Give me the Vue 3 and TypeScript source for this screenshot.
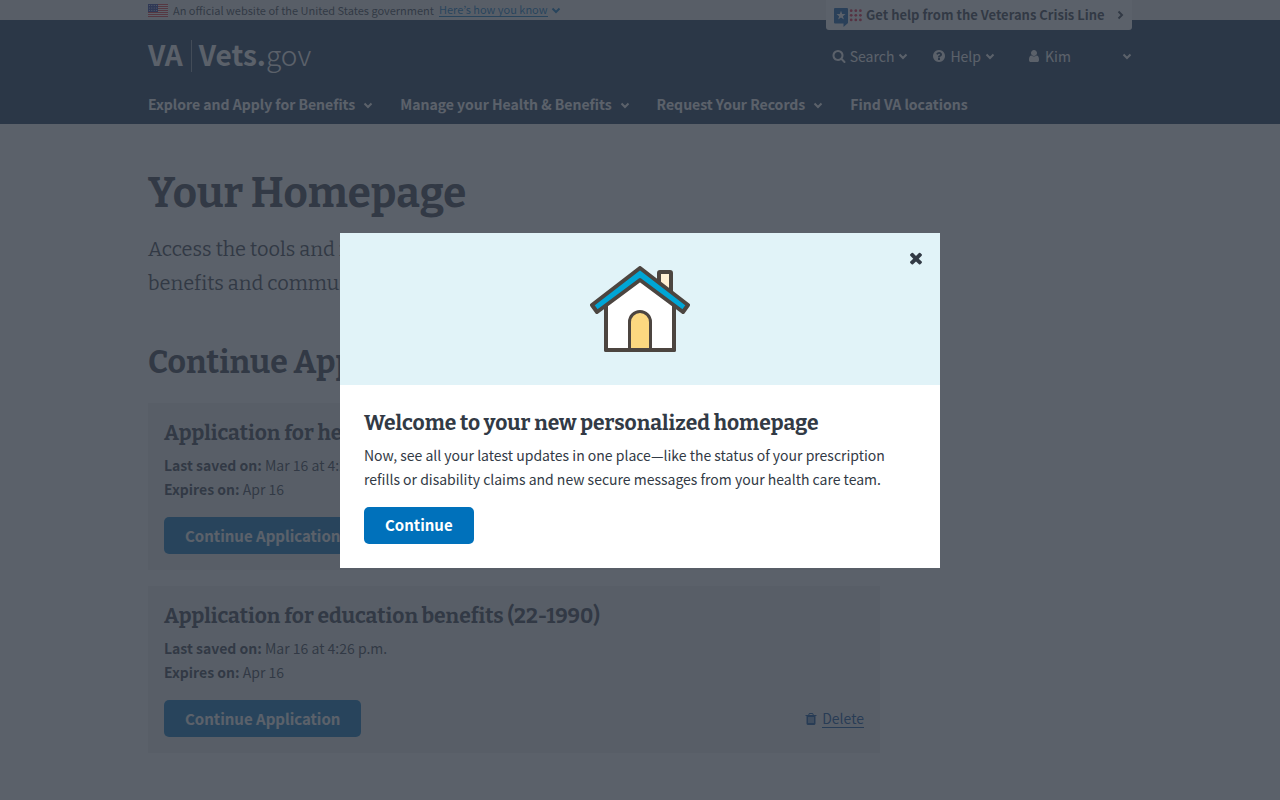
<script setup lang="ts">
import { ref } from 'vue'

interface NavItem {
  label: string
  menu: boolean
}

interface SavedForm {
  title: string
  saved: string
  expires: string
}

const navItems: NavItem[] = [
  { label: 'Explore and Apply for Benefits', menu: true },
  { label: 'Manage your Health & Benefits', menu: true },
  { label: 'Request Your Records', menu: true },
  { label: 'Find VA locations', menu: false },
]

const forms: SavedForm[] = [
  { title: 'Application for health care (10-10EZ)', saved: 'Mar 16 at 4:26 p.m.', expires: 'Apr 16' },
  { title: 'Application for education benefits (22-1990)', saved: 'Mar 16 at 4:26 p.m.', expires: 'Apr 16' },
]

const modalOpen = ref(true)
const stripes = [0, 2, 4, 6, 8, 10, 12]
const dots = [0, 1, 2, 3, 4, 5, 6, 7, 8]
const stars = [0, 1, 2, 3, 4, 5, 6, 7, 8, 9, 10, 11]
</script>

<template>
  <div class="page">
    <div class="banner">
      <div class="wrap banner-row">
        <svg class="flag" viewBox="0 0 20 13" aria-hidden="true">
          <rect width="20" height="13" fill="#fff" />
          <rect v-for="y in stripes" :key="y" :y="y" width="20" height="1" fill="#e0343a" />
          <rect width="10" height="8" fill="#2a3a9c" />
          <circle v-for="s in stars" :key="s" :cx="1.4 + (s % 4) * 2.4" :cy="1.4 + Math.floor(s / 4) * 2.5" r="0.5" fill="#fff" />
        </svg>
        <span>An official website of the United States government</span>
        <button type="button" class="know">
          <span class="know-text">Here’s how you know</span>
          <svg class="chev" viewBox="0 0 10 7" aria-hidden="true"><path d="M1.5 1.5 5 5l3.500-3.500" /></svg>
        </button>
      </div>
    </div>

    <header class="header">
      <div class="wrap header-inner">
        <a class="crisis" href="#crisis">
          <svg class="crisis-icon" viewBox="0 0 28 19" aria-hidden="true">
            <path d="M1 0h12q1 0 1 1v14l-4.500 4V15.500H1q-1 0-1-1V1q0-1 1-1z" fill="#0a5aa8" />
            <path d="m7 2.800 1.200 3.200 3.300.1-2.600 2.100 1 3.300L7 9.600l-2.900 1.900 1-3.300-2.600-2.100 3.300-.1z" fill="#fff" />
            <circle v-for="d in dots" :key="d" :cx="17.200 + (d % 3) * 4.600" :cy="2.700 + Math.floor(d / 3) * 4.600" r="1.400" fill="#e31c3d" />
          </svg>
          <span class="crisis-text">Get help from the Veterans Crisis Line</span>
          <svg class="chev-right" viewBox="0 0 7 10" aria-hidden="true"><path d="M1.500 1.500 5 5 1.500 8.500" /></svg>
        </a>

        <div class="top-row">
          <a class="logo" href="#home">
            <span class="logo-va">VA</span>
            <span class="logo-site"><b>Vets.</b>gov</span>
          </a>
          <div class="tools">
            <button type="button" class="tool">
              <svg class="icon" viewBox="0 0 1792 1792" aria-hidden="true"><path d="M1216 832q0-185-131.500-316.500t-316.500-131.500-316.500 131.500-131.500 316.500 131.500 316.500 316.500 131.500 316.500-131.500 131.500-316.500zm512 832q0 52-38 90t-90 38q-54 0-90-38l-343-342q-179 124-399 124-143 0-273.500-55.500t-225-150-150-225-55.500-273.500 55.500-273.500 150-225 225-150 273.500-55.500 273.500 55.500 225 150 150 225 55.500 273.500q0 220-124 399l343 343q37 37 37 90z" /></svg>
              <span>Search</span>
              <svg class="chev" viewBox="0 0 10 7" aria-hidden="true"><path d="M1.500 1.500 5 5l3.500-3.500" /></svg>
            </button>
            <button type="button" class="tool">
              <svg class="icon" viewBox="0 0 1792 1792" aria-hidden="true"><path d="M1024 1376v-192q0-14-9-23t-23-9h-192q-14 0-23 9t-9 23v192q0 14 9 23t23 9h192q14 0 23-9t9-23zm256-672q0-88-55.500-163t-138.500-116-170-41q-243 0-371 213-15 24 8 42l132 100q7 6 19 6 16 0 25-12 53-68 86-92 34-24 86-24 48 0 85.500 26t37.500 59q0 38-20 61t-68 45q-63 28-115.500 86.500t-52.500 125.500v36q0 14 9 23t23 9h192q14 0 23-9t9-23q0-19 21.500-49.500t54.500-49.500q32-18 49-28.500t46-35 44.500-48 28-60.500 12.500-81zm384 192q0 209-103 385.500t-279.500 279.500-385.500 103-385.500-103-279.500-279.500-103-385.500 103-385.500 279.500-279.500 385.500-103 385.500 103 279.500 279.500 103 385.500z" /></svg>
              <span>Help</span>
              <svg class="chev" viewBox="0 0 10 7" aria-hidden="true"><path d="M1.500 1.500 5 5l3.500-3.500" /></svg>
            </button>
            <button type="button" class="tool account">
              <svg class="icon" viewBox="0 0 1792 1792" aria-hidden="true"><path d="M1536 1399q0 109-62.500 187t-150.500 78h-854q-88 0-150.500-78t-62.500-187q0-85 8.500-160.500t31.500-152 58.500-131 94-89 134.500-34.500q131 128 313 128t313-128q76 0 134.500 34.500t94 89 58.500 131 31.500 152 8.500 160.500zm-256-887q0 159-112.500 271.500t-271.500 112.500-271.500-112.500-112.500-271.500 112.500-271.500 271.500-112.500 271.500 112.500 112.500 271.500z" /></svg>
              <span>Kim</span>
              <svg class="chev" viewBox="0 0 10 7" aria-hidden="true"><path d="M1.500 1.500 5 5l3.500-3.500" /></svg>
            </button>
          </div>
        </div>

        <nav class="nav" aria-label="Main">
          <template v-for="item in navItems" :key="item.label">
            <button v-if="item.menu" type="button" class="nav-item">
              <span>{{ item.label }}</span>
              <svg class="chev" viewBox="0 0 10 7" aria-hidden="true"><path d="M1.500 1.500 5 5l3.500-3.500" /></svg>
            </button>
            <a v-else class="nav-item" href="#locations">{{ item.label }}</a>
          </template>
        </nav>
      </div>
    </header>

    <main class="wrap main">
      <div class="content">
        <h1>Your Homepage</h1>
        <p class="intro">Access the tools and information you’ll need to manage your<br />benefits and communicate with your health care team.</p>
        <h2>Continue Applications</h2>
        <section v-for="form in forms" :key="form.title" class="card">
          <h3>{{ form.title }}</h3>
          <p><b>Last saved on:</b> {{ form.saved }}</p>
          <p><b>Expires on:</b> {{ form.expires }}</p>
          <div class="card-actions">
            <button type="button" class="btn">Continue Application</button>
            <a class="delete" href="#delete">
              <svg class="icon" viewBox="0 0 1792 1792" aria-hidden="true"><path d="M704 1376v-704q0-14-9-23t-23-9h-64q-14 0-23 9t-9 23v704q0 14 9 23t23 9h64q14 0 23-9t9-23zm256 0v-704q0-14-9-23t-23-9h-64q-14 0-23 9t-9 23v704q0 14 9 23t23 9h64q14 0 23-9t9-23zm256 0v-704q0-14-9-23t-23-9h-64q-14 0-23 9t-9 23v704q0 14 9 23t23 9h64q14 0 23-9t9-23zm-544-992h448l-48-117q-7-9-17-11h-317q-10 2-17 11zm928 32v64q0 14-9 23t-23 9h-96v948q0 83-47 143.500t-113 60.500h-832q-66 0-113-58.500t-47-141.500v-952h-96q-14 0-23-9t-9-23v-64q0-14 9-23t23-9h309l70-167q15-37 54-63t79-26h320q40 0 79 26t54 63l70 167h309q14 0 23 9t9 23z" /></svg>
              <span>Delete</span>
            </a>
          </div>
        </section>
      </div>
    </main>

    <div v-if="modalOpen" class="overlay">
      <div class="modal" role="dialog" aria-modal="true" aria-labelledby="welcome-title">
        <div class="modal-art">
          <svg class="house" viewBox="0 0 100 86" aria-hidden="true">
            <g stroke="#4c4540" stroke-width="4" stroke-linejoin="round" stroke-linecap="round">
              <path d="M69 24V7q0-1 1-1h10q1 0 1 1v26z" fill="#fff0d4" />
              <path d="M16 36 50 10l34 26v48H16z" fill="#fff" />
              <path d="M39.500 84V56a10.500 10.500 0 0 1 21 0v28" fill="#fcd880" stroke-width="3" />
              <path d="M16 84h68" />
              <path d="m50 2 48 37-5 7-43-32L7 46l-5-7z" fill="#00a6d6" />
            </g>
          </svg>
          <button type="button" class="close" aria-label="Close" @click="modalOpen = false">
            <svg viewBox="0 0 1792 1792" aria-hidden="true"><path d="M1490 1322q0 40-28 68l-136 136q-28 28-68 28t-68-28l-294-294-294 294q-28 28-68 28t-68-28l-136-136q-28-28-28-68t28-68l294-294-294-294q-28-28-28-68t28-68l136-136q28-28 68-28t68 28l294 294 294-294q28-28 68-28t68 28l136 136q28 28 28 68t-28 68l-294 294 294 294q28 28 28 68z" /></svg>
          </button>
        </div>
        <div class="modal-body">
          <h3 id="welcome-title">Welcome to your new personalized homepage</h3>
          <p>Now, see all your latest updates in one place—like the status of your prescription refills or disability claims and new secure messages from your health care team.</p>
          <button type="button" class="btn" @click="modalOpen = false">Continue</button>
        </div>
      </div>
    </div>
  </div>
</template>

<style>
html,
body {
  margin: 0;
  background: #fff;
}
</style>

<style scoped>
.page {
  --sans: "Source Sans Pro", "Noto Sans CJK KR", "Open Sans", sans-serif;
  --serif: Bitter, "DejaVu Serif Condensed", "DejaVu Serif", serif;
  color: #323a45;
  font: 14px/24px var(--sans);
}
.page * {
  box-sizing: border-box;
}
button {
  padding: 0;
  border: 0;
  background: none;
  color: inherit;
  font: inherit;
  cursor: pointer;
}
a {
  color: inherit;
  text-decoration: none;
}
svg {
  display: block;
  flex: none;
}
h1,
h2,
h3,
p {
  margin: 0;
}
.wrap {
  max-width: 1000px;
  margin: 0 auto;
  padding: 0 8px;
}
.chev {
  width: 10px;
  height: 7px;
}
.chev-right {
  width: 7px;
  height: 10px;
}
.chev path,
.chev-right path {
  fill: none;
  stroke: currentColor;
  stroke-width: 2;
}
.icon {
  width: 14px;
  height: 14px;
  fill: currentColor;
}
.banner {
  background: #f1f1f1;
  font-size: 11px;
  line-height: 20px;
}
.banner-row {
  display: flex;
  align-items: center;
  gap: 5px;
}
.flag {
  width: 20px;
  height: 13px;
}
.know {
  display: flex;
  align-items: center;
  gap: 3px;
  color: #0071bb;
}
.know-text {
  line-height: 13px;
  border-bottom: 1px solid;
}
.header {
  background: #112e51;
  color: #fff;
}
.header-inner {
  position: relative;
  padding-top: 16px;
}
.crisis {
  position: absolute;
  top: -20px;
  right: 8px;
  display: flex;
  align-items: center;
  gap: 4px;
  min-width: 306px;
  height: 30px;
  padding: 0 8px;
  border-radius: 0 0 3px 3px;
  background: #fff;
  color: #323a45;
  font-size: 13px;
  font-weight: 700;
}
.crisis-text {
  flex: 1;
}
.crisis-icon {
  width: 28px;
  height: 19px;
  margin-top: 4px;
}
.top-row {
  display: flex;
  justify-content: space-between;
  align-items: center;
  height: 40px;
}
.logo {
  display: flex;
  align-items: center;
  font-size: 28px;
  line-height: 28px;
}
.logo span {
  padding-bottom: 4px;
}
.logo .logo-va {
  padding-right: 8px;
  border-right: 1px solid #8694a5;
  font-weight: 700;
}
.logo-site {
  padding-left: 7px;
  font-weight: 300;
}
.logo-site b {
  font-weight: 700;
}
.tools {
  display: flex;
  gap: 24px;
}
.tool {
  display: flex;
  align-items: center;
  gap: 4px;
}
.account {
  width: 105px;
  margin-left: 8px;
}
.account .chev {
  margin-left: auto;
}
.nav {
  display: flex;
  gap: 27px;
  padding: 16px 0 8px;
}
.nav-item {
  display: flex;
  align-items: center;
  gap: 8px;
  font-weight: 700;
}
.nav-item .chev {
  margin-top: 3px;
}
.main {
  padding-top: 40px;
  padding-bottom: 44px;
}
.content {
  max-width: 732px;
}
h1,
h2,
h3,
.intro {
  font-family: var(--serif);
}
h1 {
  font-size: 42px;
  line-height: 58px;
}
.intro {
  margin-top: 10px;
  font-size: 20px;
  line-height: 34px;
}
h2 {
  margin-top: 42px;
  font-size: 32px;
  line-height: 40px;
}
h3 {
  font-size: 21px;
  line-height: 28px;
}
.card {
  margin-top: 16px;
  padding: 16px;
  background: #f1f1f1;
}
h2 + .card {
  margin-top: 21px;
}
.card h3 {
  margin-bottom: 6px;
}
.card-actions {
  display: flex;
  justify-content: space-between;
  align-items: center;
  margin-top: 16px;
}
.btn {
  height: 37px;
  padding: 0 21px;
  border-radius: 5px;
  background: #0071bb;
  color: #fff;
  font-size: 15px;
  font-weight: 700;
}
.delete {
  display: flex;
  align-items: center;
  gap: 4px;
  color: #004795;
}
.delete span {
  line-height: 18px;
  border-bottom: 1px solid;
}
.overlay {
  position: fixed;
  inset: 0;
  display: flex;
  align-items: center;
  justify-content: center;
  background: rgba(50, 58, 69, 0.8);
}
.modal {
  width: 600px;
  max-width: 100%;
  background: #fff;
}
.modal-art {
  position: relative;
  display: flex;
  justify-content: center;
  padding: 33px 0;
  background: #e1f3f8;
}
.house {
  width: 100px;
  height: 86px;
}
.close {
  position: absolute;
  top: 16px;
  right: 15px;
}
.close svg {
  width: 18px;
  height: 18px;
  fill: #323a45;
}
.modal-body {
  padding: 24px;
}
.modal-body p {
  margin: 6px 0 16px;
}
</style>
